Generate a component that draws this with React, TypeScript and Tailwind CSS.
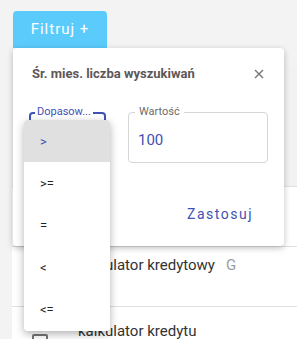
import React from "react";

export default function App() {
  const items = [">", ">=", "=", "<", "<="];
  return (
    <div className="relative h-[339px] w-[297px] overflow-hidden bg-[#f3f3f3]" style={{ fontFamily: "Roboto, 'Noto Sans', sans-serif" }}>
      {/* top bar with filter button */}
      <div className="pl-[13px] pt-[11px]">
        <div className="flex h-[37px] w-[94px] items-center justify-center rounded-t-[4px] bg-[#5bcbfb] text-[15px] tracking-[1px] text-white">
          Filtruj +
        </div>
      </div>
      {/* table card behind */}
      <div className="ml-[12px] mt-[18px] bg-white">
        <div className="h-[121px] border-b border-[#e0e0e0] bg-[#f2f2f2]" />
        <div className="h-[60px] border-b border-[#e0e0e0]" />
        <div className="flex h-[60px] items-start border-b border-[#e0e0e0] pl-[66px] pt-[7px] text-[15px] text-[#333]">
          <span>kalkulator kredytowy</span>
          <span className="ml-[11px] text-[#9e9e9e]">G</span>
        </div>
        <div className="relative h-[60px] pl-[66px] pt-[13px] text-[15px] text-[#333]">
          <span>kalkulator kredytu</span>
          <div className="absolute left-[20px] top-[27px] h-[16px] w-[16px] rounded-[2px] border-2 border-[#757575]" />
        </div>
      </div>

      {/* modal */}
      <div className="absolute left-[13px] top-[48px] flex h-[198px] w-[271px] flex-col rounded-[4px] bg-white shadow-[0_2px_6px_rgba(0,0,0,0.25)]">
        <div className="flex items-center justify-between pl-[19px] pr-[20px] pt-[16px]">
          <span className="text-[13px] font-bold text-[#5d5757]">Śr. mies. liczba wyszukiwań</span>
          <svg width="10" height="10" viewBox="0 0 10 10">
            <path d="M1 1L9 9M9 1L1 9" stroke="#757575" strokeWidth="1.4" />
          </svg>
        </div>
        <div className="mt-[28px] flex gap-[22px] pl-[16px]">
          {/* select (focused) */}
          <div className="relative h-[50px] w-[77px] rounded-[4px] border-2 border-[#3f51b5]">
            <div className="absolute left-[4px] top-[-9px] bg-white px-[2px] text-[11px] leading-[14px] text-[#3f51b5]">Dopasow...</div>
          </div>
          {/* value input */}
          <div className="relative h-[51px] w-[140px] rounded-[4px] border border-[#d6d6d6]">
            <div className="absolute left-[6px] top-[-8px] bg-white px-[4px] text-[11px] leading-[14px] text-[#6b6b6b]">Wartość</div>
            <div className="pl-[9px] pt-[16px] text-[15px] text-[#3f51b5]">100</div>
          </div>
        </div>
        <div className="mt-[auto] mb-[21px] flex justify-end pr-[31px]">
          <span className="text-[14px] tracking-[1.5px] text-[#3f51b5]">Zastosuj</span>
        </div>
      </div>

      {/* dropdown menu */}
      <div className="absolute left-[24px] top-[120px] w-[86px] overflow-hidden rounded-[4px] bg-white pb-[1px] shadow-[0_3px_8px_rgba(0,0,0,0.3)]">
        {items.map((it, i) => (
          <div
            key={it}
            className={
              i === 0
                ? "flex h-[42px] items-center bg-[#e0e0e0] pl-[16px] pt-[2px] text-[13px] text-[#3f51b5]"
                : "flex h-[42px] items-center pl-[16px] pt-[2px] text-[13px] text-[#222]"
            }
          >
            {it}
          </div>
        ))}
      </div>
    </div>
  );
}
